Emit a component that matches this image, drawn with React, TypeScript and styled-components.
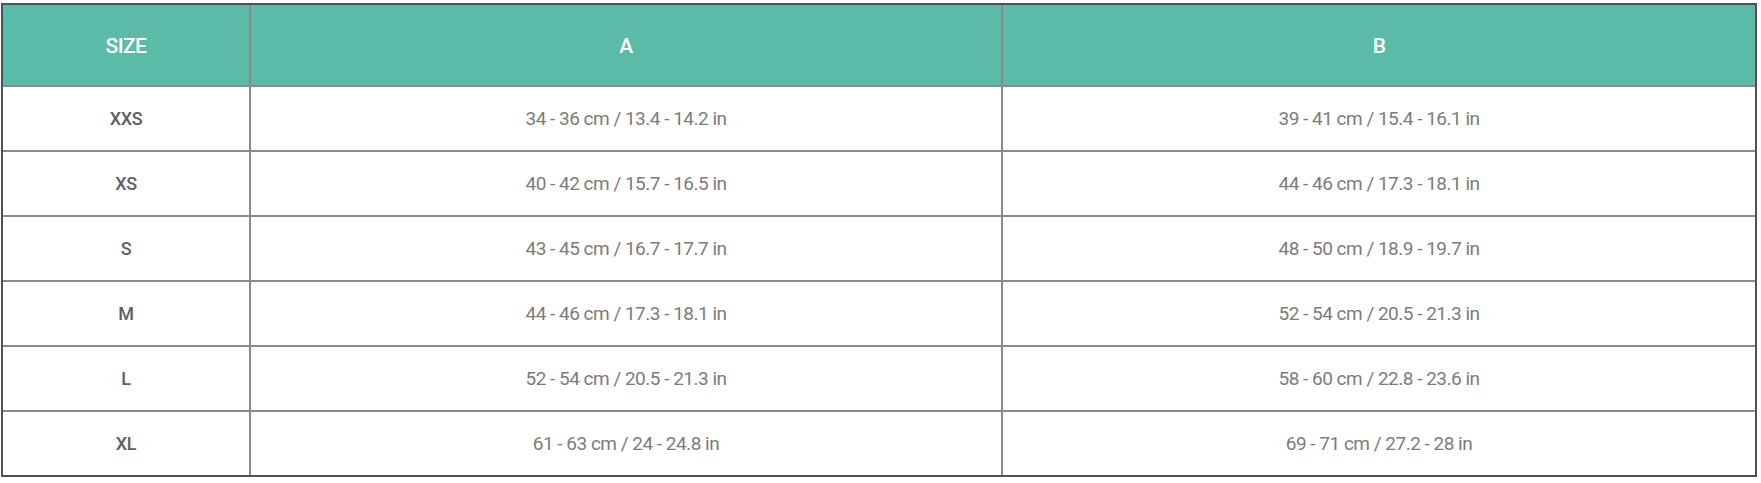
import React from "react";
import styled, { createGlobalStyle } from "styled-components";

const ROWS = [
  { size: "XXS", a: "34 - 36 cm / 13.4 - 14.2 in", b: "39 - 41 cm / 15.4 - 16.1 in" },
  { size: "XS", a: "40 - 42 cm / 15.7 - 16.5 in", b: "44 - 46 cm / 17.3 - 18.1 in" },
  { size: "S", a: "43 - 45 cm / 16.7 - 17.7 in", b: "48 - 50 cm / 18.9 - 19.7 in" },
  { size: "M", a: "44 - 46 cm / 17.3 - 18.1 in", b: "52 - 54 cm / 20.5 - 21.3 in" },
  { size: "L", a: "52 - 54 cm / 20.5 - 21.3 in", b: "58 - 60 cm / 22.8 - 23.6 in" },
  { size: "XL", a: "61 - 63 cm / 24 - 24.8 in", b: "69 - 71 cm / 27.2 - 28 in" },
];

export default function App() {
  return (
    <>
      <GlobalStyle />
      <Page>
        <SizeTable>
          <HeadCell>SIZE</HeadCell>
          <HeadCell>A</HeadCell>
          <HeadCell last>B</HeadCell>
          {ROWS.map((row, i) => {
            const bottom = i === ROWS.length - 1;
            return (
              <React.Fragment key={row.size}>
                <SizeCell bottom={bottom}>{row.size}</SizeCell>
                <ValueCell bottom={bottom}>{row.a}</ValueCell>
                <ValueCell bottom={bottom} last>
                  {row.b}
                </ValueCell>
              </React.Fragment>
            );
          })}
        </SizeTable>
      </Page>
    </>
  );
}

const GlobalStyle = createGlobalStyle`
  html, body {
    margin: 0;
    background: #ffffff;
  }
  body {
    font-family: Roboto, "Liberation Sans", sans-serif;
  }
`;

const Page = styled.div`
  padding: 3px 0 0 1px;
`;

const SizeTable = styled.div`
  display: grid;
  grid-template-columns: 248px 752px 752px;
  grid-template-rows: 82px repeat(5, 65px) 63px;
  width: 1756px;
  box-sizing: border-box;
  border: 2px solid #505050;
`;

const Cell = styled.div<{ last?: boolean; bottom?: boolean }>`
  display: flex;
  align-items: center;
  justify-content: center;
  box-sizing: border-box;
  border-right: ${({ last }) => (last ? "none" : "2px solid #8a8a8a")};
  border-bottom: ${({ bottom }) => (bottom ? "none" : "2px solid #8a8a8a")};
`;

const HeadCell = styled(Cell)`
  background: #5bbba8;
  color: #ffffff;
  font-size: 21px;
  font-weight: 500;
  letter-spacing: -0.6px;
  padding-top: 2px;
`;

const SizeCell = styled(Cell)`
  color: #606060;
  font-size: 18px;
  font-weight: 500;
  letter-spacing: -0.3px;
`;

const ValueCell = styled(Cell)`
  color: #7c7c7c;
  font-size: 19px;
  font-weight: 400;
  letter-spacing: -0.5px;
`;
